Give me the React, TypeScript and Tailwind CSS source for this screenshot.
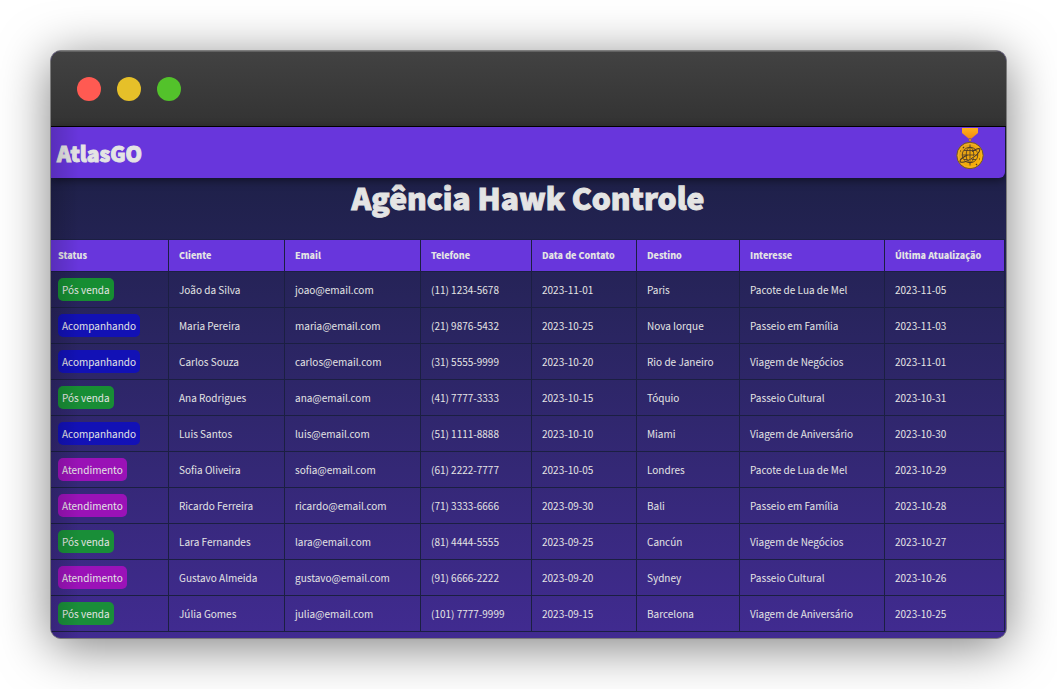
import React from "react";

type Status = "Pós venda" | "Acompanhando" | "Atendimento";

const statusStyles: Record<Status, string> = {
  "Pós venda": "bg-[#14a02c]/85",
  Acompanhando: "bg-[#1010be]/90",
  Atendimento: "bg-[#a50fbe]/90",
};

const columns = [
  { label: "Status", width: "w-[118px]" },
  { label: "Cliente", width: "w-[116px]" },
  { label: "Email", width: "w-[136px]" },
  { label: "Telefone", width: "w-[111px]" },
  { label: "Data de Contato", width: "w-[105px]" },
  { label: "Destino", width: "w-[103px]" },
  { label: "Interesse", width: "w-[145px]" },
  { label: "Última Atualização", width: "w-[120px]" },
];

const clients: [Status, ...string[]][] = [
  ["Pós venda", "João da Silva", "joao@email.com", "(11) 1234-5678", "2023-11-01", "Paris", "Pacote de Lua de Mel", "2023-11-05"],
  ["Acompanhando", "Maria Pereira", "maria@email.com", "(21) 9876-5432", "2023-10-25", "Nova Iorque", "Passeio em Família", "2023-11-03"],
  ["Acompanhando", "Carlos Souza", "carlos@email.com", "(31) 5555-9999", "2023-10-20", "Rio de Janeiro", "Viagem de Negócios", "2023-11-01"],
  ["Pós venda", "Ana Rodrigues", "ana@email.com", "(41) 7777-3333", "2023-10-15", "Tóquio", "Passeio Cultural", "2023-10-31"],
  ["Acompanhando", "Luis Santos", "luis@email.com", "(51) 1111-8888", "2023-10-10", "Miami", "Viagem de Aniversário", "2023-10-30"],
  ["Atendimento", "Sofia Oliveira", "sofia@email.com", "(61) 2222-7777", "2023-10-05", "Londres", "Pacote de Lua de Mel", "2023-10-29"],
  ["Atendimento", "Ricardo Ferreira", "ricardo@email.com", "(71) 3333-6666", "2023-09-30", "Bali", "Passeio em Família", "2023-10-28"],
  ["Pós venda", "Lara Fernandes", "lara@email.com", "(81) 4444-5555", "2023-09-25", "Cancún", "Viagem de Negócios", "2023-10-27"],
  ["Atendimento", "Gustavo Almeida", "gustavo@email.com", "(91) 6666-2222", "2023-09-20", "Sydney", "Passeio Cultural", "2023-10-26"],
  ["Pós venda", "Júlia Gomes", "julia@email.com", "(101) 7777-9999", "2023-09-15", "Barcelona", "Viagem de Aniversário", "2023-10-25"],
];

function Medal() {
  return (
    <svg viewBox="0 0 30 44" className="h-11 w-[30px]" aria-hidden="true">
      <defs>
        <linearGradient id="ribbon" x2="0" y2="1">
          <stop offset="0" stopColor="#ffb01c" />
          <stop offset="1" stopColor="#f18b13" />
        </linearGradient>
        <linearGradient id="gold" x2="1" y2="1">
          <stop offset="0" stopColor="#dc9c1e" />
          <stop offset="1" stopColor="#ffb300" />
        </linearGradient>
      </defs>
      <path d="M7 1h16v5l-6.5 5.500h-3L7 6z" fill="url(#ribbon)" />
      <circle cx="15" cy="13" r="1.3" fill="#e3a13c" stroke="#765225" strokeWidth=".5" />
      <circle cx="15" cy="28.5" r="13.2" fill="url(#gold)" stroke="#71542b" />
      <circle cx="15" cy="28.5" r="11.7" fill="none" stroke="#f7b52b" strokeWidth=".8" />
      <g fill="none" stroke="#4a3928" strokeWidth=".8">
        <circle cx="15" cy="28" r="7.8" />
        <ellipse cx="15" cy="28" rx="3.8" ry="7.8" />
        <path d="M15 17.5v21M7 28h16M9 23.5h12M9 32.5h12" />
      </g>
      <path d="M7.5 34C13 34 21 28.5 23.5 23.5 21.5 31 13.5 36 7.5 34z" fill="#f5b128" />
      <g fill="none" stroke="#4a3928">
        <path d="M5.5 35c5 1.5 18.500-7 19.500-12.500M5.500 35c-2-2 3-5 7-7M25 22.500c-1-2-5 0-8 2" strokeWidth="1.1" />
        <path d="M5 24h1M24 32h1M8 20l1 1M21 37l1 1" strokeWidth="1.2" />
      </g>
    </svg>
  );
}

export default function App() {
  return (
    <div className="min-h-screen bg-white p-[50px] font-['Noto_Sans_CJK_JP','Noto_Sans',sans-serif]">
      <div className="relative overflow-hidden rounded-[11px] border border-[#7c7c7c] bg-[#3e2a8b] shadow-[0_8px_50px_rgba(0,0,0,0.5)]">
        <div className="flex h-[76px] items-center gap-4 border-b border-black bg-linear-to-b from-[#424242] to-[#333333] px-[26px] pt-px shadow-[inset_0_1px_0_#626262]">
          <span className="size-6 rounded-full bg-[#ff5a52]" />
          <span className="size-6 rounded-full bg-[#e6c029]" />
          <span className="size-6 rounded-full bg-[#53c22b]" />
        </div>

        <div className="relative bg-linear-to-b from-[#1b1f42] to-[#412b91] pr-px pb-[6px] text-[#e4e4e4]">
          <header className="relative flex h-[51px] items-center justify-between rounded-br-md bg-[#6836dc] pr-5 pl-[6px] shadow-[0_2px_10px_rgba(0,0,0,0.5)]">
            <span className="pt-0.5 text-[21px] font-black [-webkit-text-stroke:1px_currentColor]">AtlasGO</span>
            <div className="self-start">
              <Medal />
            </div>
          </header>

          <h1 className="flex h-[61px] items-start justify-center text-[30px] leading-[38px] font-black [-webkit-text-stroke:1px_currentColor]">
            Agência Hawk Controle
          </h1>

          <table className="w-full table-fixed border-separate border-spacing-0 text-left text-[10px] leading-4">
            <colgroup>
              {columns.map((column) => (
                <col key={column.label} className={column.width} />
              ))}
            </colgroup>
            <thead>
              <tr className="h-[33px] bg-[#6836dc]">
                {columns.map((column) => (
                  <th
                    key={column.label}
                    scope="col"
                    className="border-y border-r border-[#1b1f42] p-0 pl-[10px] text-[9px] font-black whitespace-nowrap first:pl-[7px]"
                  >
                    {column.label}
                  </th>
                ))}
              </tr>
            </thead>
            <tbody>
              {clients.map(([status, ...details]) => (
                <tr key={details[0]} className="h-9">
                  <td className="border-r border-b border-[#1b1f42] p-0 pl-[7px]">
                    <span className={`inline-block rounded-[5px] px-1 py-[3px] align-middle leading-[17px] ${statusStyles[status]}`}>
                      {status}
                    </span>
                  </td>
                  {details.map((detail, index) => (
                    <td key={index} className="border-r border-b border-[#1b1f42] p-0 pl-[10px] whitespace-nowrap">
                      {detail}
                    </td>
                  ))}
                </tr>
              ))}
            </tbody>
          </table>
          <div className="pointer-events-none absolute inset-y-0 left-0 w-7 bg-linear-to-r from-black/15 to-transparent" />
        </div>
      </div>
    </div>
  );
}
